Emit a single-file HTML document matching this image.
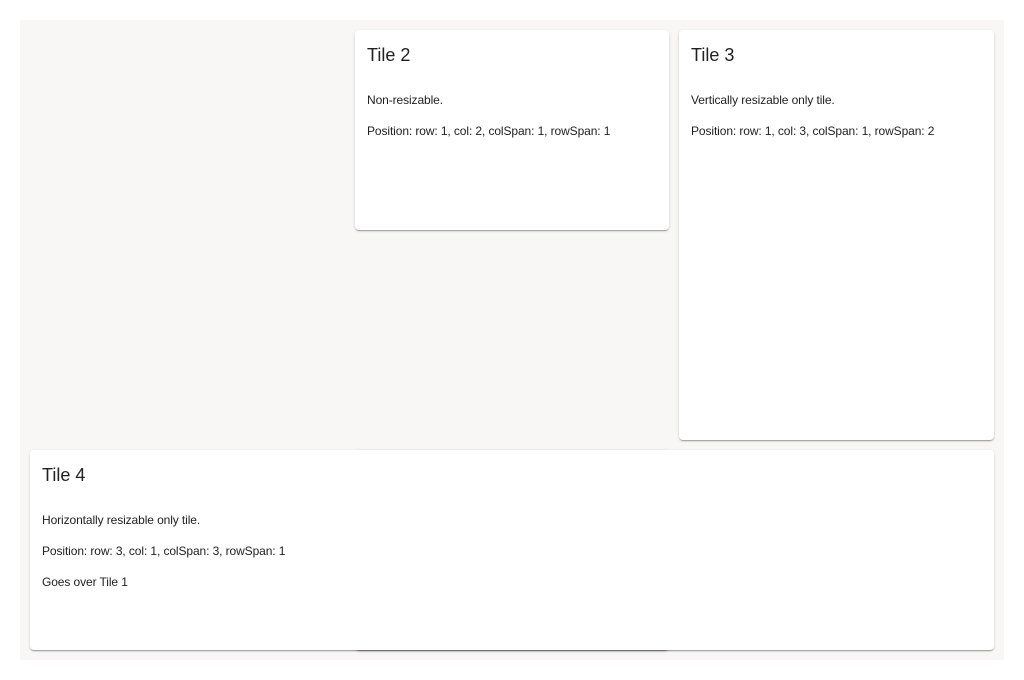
<!DOCTYPE html>
<html><head><style>
html,body{margin:0;padding:0;background:#fff;width:1024px;height:680px;overflow:hidden;font-family:"Liberation Sans",sans-serif;}
.wrap{position:absolute;left:20px;top:20px;width:984px;height:640px;background:#f8f7f5;}
.card{position:absolute;background:#fff;border-radius:4px;box-shadow:0 2px 1px -1px rgba(0,0,0,.2),0 1px 1px 0 rgba(0,0,0,.14),0 1px 3px 0 rgba(0,0,0,.12);color:#212121;box-sizing:border-box;padding:14px 12px;}
.card h2{margin:0;font-size:18px;font-weight:normal;line-height:22px;}
.card p{margin:0;font-size:12px;line-height:14px;letter-spacing:-0.1px;}
.card p.first{margin-top:27px;}
.card p+p{margin-top:17px;}
</style></head><body>
<div class="wrap"></div>
<div class="card" style="left:355px;top:30px;width:314px;height:200px;"><h2>Tile 2</h2><p class="first">Non-resizable.</p><p>Position: row: 1, col: 2, colSpan: 1, rowSpan: 1</p></div>
<div class="card" style="left:679px;top:30px;width:315px;height:410px;"><h2>Tile 3</h2><p class="first">Vertically resizable only tile.</p><p>Position: row: 1, col: 3, colSpan: 1, rowSpan: 2</p></div>
<div class="card" style="left:355px;top:450px;width:314px;height:200px;"></div>
<div class="card" style="left:30px;top:450px;width:964px;height:200px;"><h2>Tile 4</h2><p class="first">Horizontally resizable only tile.</p><p>Position: row: 3, col: 1, colSpan: 3, rowSpan: 1</p><p>Goes over Tile 1</p></div>
</body></html>
